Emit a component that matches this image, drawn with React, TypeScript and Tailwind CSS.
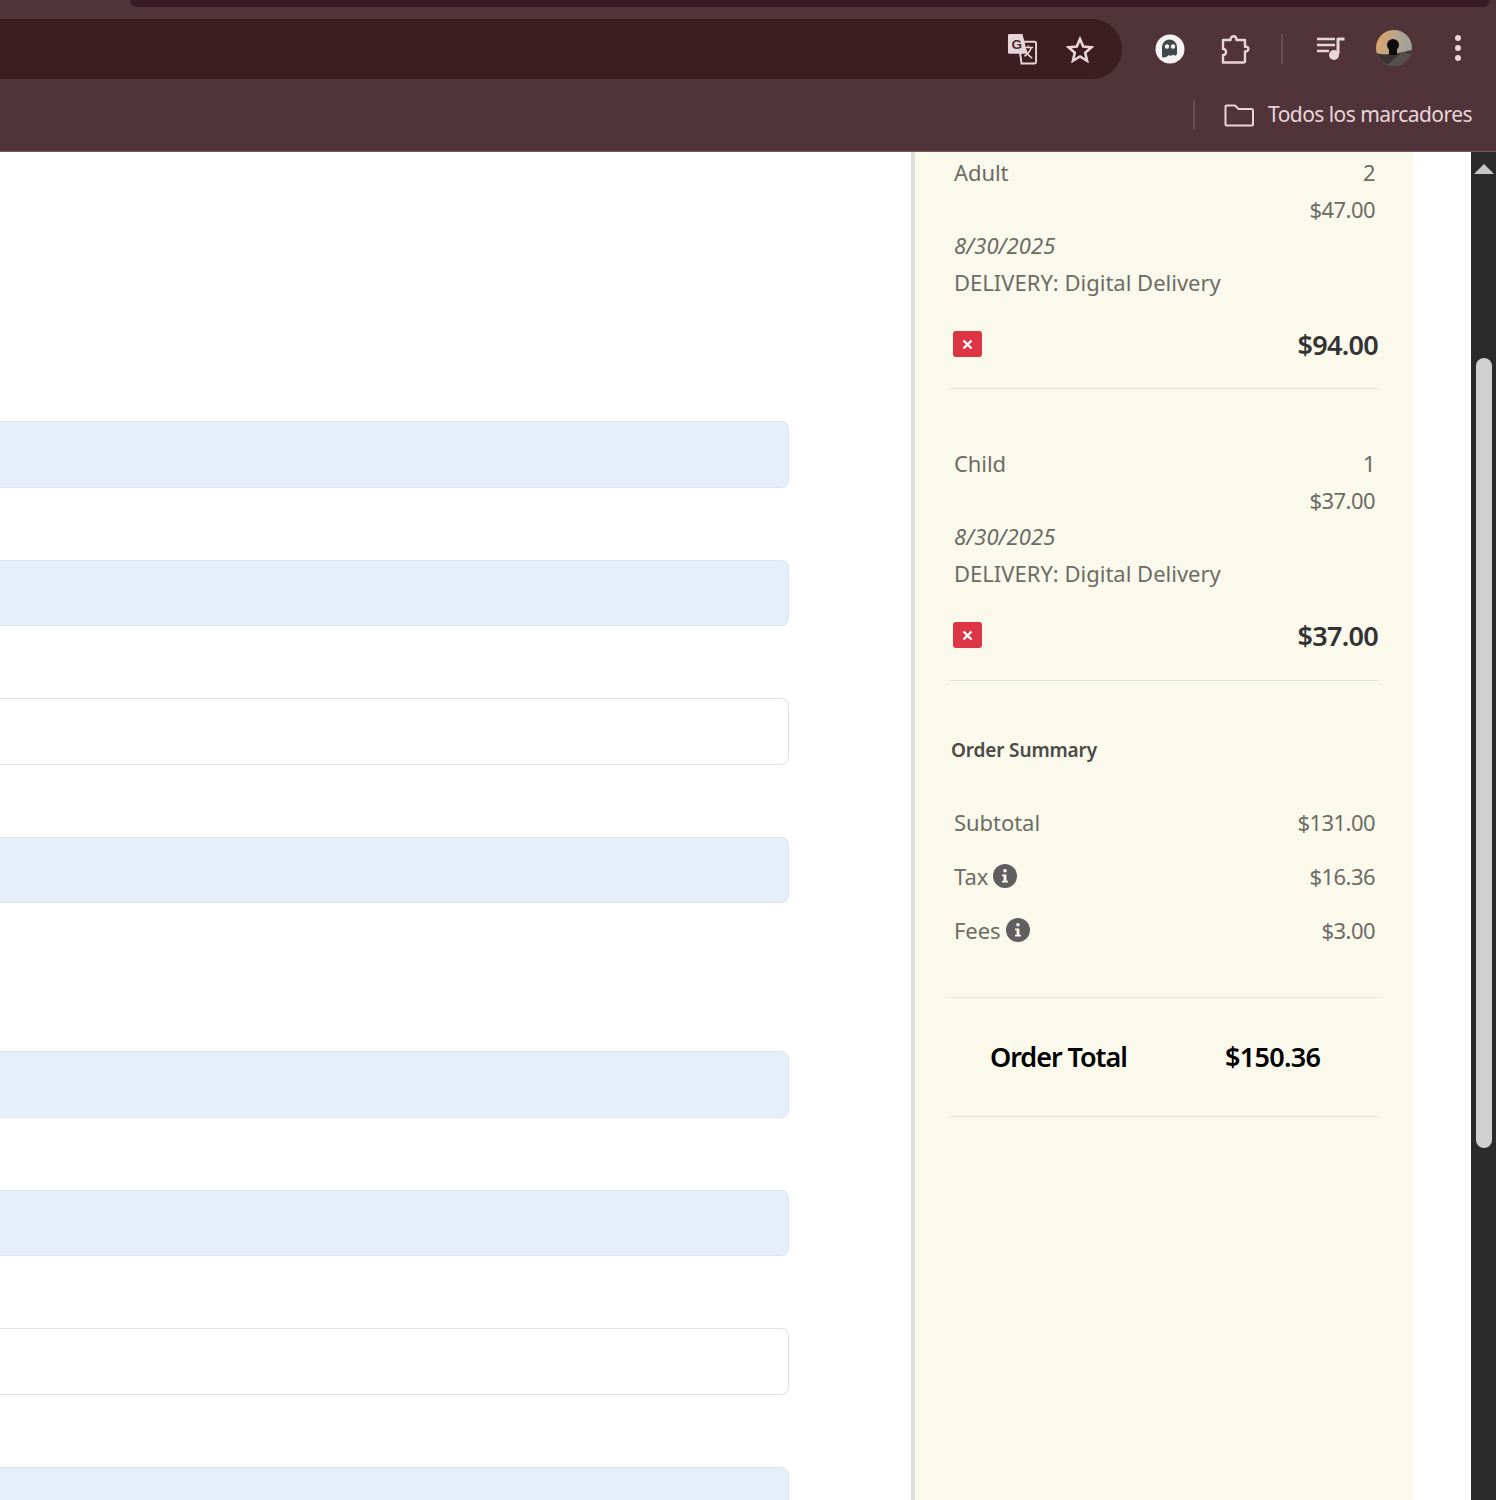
function TranslateIcon() {
  return (
    <svg width="31" height="32" viewBox="0 0 32 33" fill="none">
      <path d="M12 9h16.5a1.5 1.5 0 0 1 1.5 1.5V30a1.5 1.5 0 0 1-1.5 1.5H15z" stroke="#e8d5da" strokeWidth="2" />
      <path d="M17 15h10M22 13v2M25 15c-1 4-4 7-7 9M19 17c1 3 4 7 7 9" stroke="#e8d5da" strokeWidth="1.6" />
      <path d="M2.5 1h13.5l5 20.5H2.5A1.5 1.5 0 0 1 1 20V2.500A1.500 1.500 0 0 1 2.500 1z" fill="#e8d5da" />
      <text x="10" y="16" textAnchor="middle" fontFamily="'Liberation Sans', sans-serif" fontWeight="700" fontSize="14" fill="#4a2d33">
        G
      </text>
    </svg>
  );
}

function StarIcon() {
  return (
    <svg width="28" height="27" viewBox="0 0 28 27" fill="none" className="ml-[28px] mr-[1px]">
      <path d="M14 3l3.200 7.600 8.300.7-6.300 5.400 1.900 8.100L14 20.500l-7.100 4.300 1.900-8.100-6.300-5.400 8.300-.7z" stroke="#e8d5da" strokeWidth="2.600" strokeLinejoin="miter" />
    </svg>
  );
}

function GhostIcon() {
  return (
    <svg width="30" height="30" viewBox="0 0 30 30">
      <circle cx="15" cy="15" r="14.500" fill="#f7f3f3" />
      <path d="M7 23V13a7.500 7.500 0 0 1 15 0v7c-1 2-3 2-4 .5-1 1.500-3 1.500-4 .5-2 2-5 3-7 2z" fill="#3e4a47" />
      <circle cx="12" cy="12.500" r="2.200" fill="#f7f3f3" />
      <circle cx="18" cy="12.500" r="2.200" fill="#f7f3f3" />
    </svg>
  );
}

function PuzzleIcon() {
  return (
    <svg width="32" height="30" viewBox="0 0 32 30" fill="none" stroke="#e8d5da" strokeWidth="2.400" strokeLinejoin="round">
      <path d="M4 6h7.500c0-5 6-5 6 0H26v7c4-1.500 5 4.500 0 4.500V27a1.500 1.500 0 0 1-1.500 1.500H4V21c4 .5 4-6.500 0-6z" />
    </svg>
  );
}

function MediaIcon() {
  return (
    <svg width="29" height="25" viewBox="0 0 29 25" fill="none">
      <path d="M1 3h18M1 9h18M1 15h12" stroke="#e8d5da" strokeWidth="2.600" />
      <path d="M22 2v16" stroke="#e8d5da" strokeWidth="3" />
      <path d="M22 3h6.500" stroke="#e8d5da" strokeWidth="3" />
      <circle cx="18" cy="19" r="5" fill="#e8d5da" />
    </svg>
  );
}

function Avatar() {
  return (
    <svg width="36" height="36" viewBox="0 0 36 36">
      <defs>
        <linearGradient id="sky" x1="0" y1="0.2" x2="1" y2="0.5">
          <stop offset="0" stopColor="#e0a468" />
          <stop offset="0.5" stopColor="#b8a58c" />
          <stop offset="1" stopColor="#99a09a" />
        </linearGradient>
        <clipPath id="round">
          <circle cx="18" cy="18" r="18" />
        </clipPath>
      </defs>
      <g clipPath="url(#round)">
        <rect width="36" height="36" fill="url(#sky)" />
        <path d="M0 23c10 3 24 0 36-3v16H0z" fill="#3b3431" />
        <path d="M10 36l16-14 10 2v12z" fill="#55504b" />
        <circle cx="17" cy="15" r="6" fill="#0e0c0d" />
        <path d="M13 19h8v6h-8z" fill="#0e0c0d" />
      </g>
    </svg>
  );
}

function FolderIcon() {
  return (
    <svg width="30" height="23" viewBox="0 0 30 23" fill="none" stroke="#e8d5da" strokeWidth="2">
      <path d="M2.500 1.500h8.500l3.500 3.500h13a1.500 1.500 0 0 1 1.500 1.500v14a1 1 0 0 1-1 1h-25.500a1 1 0 0 1-1-1V2.500a1 1 0 0 1 1-1z" strokeLinejoin="round" />
    </svg>
  );
}

function InfoDot() {
  return (
    <svg width="24" height="24" viewBox="0 0 24 24" className="shrink-0">
      <circle cx="12" cy="12" r="12" fill="#5f5f5f" />
      <circle cx="12" cy="6.800" r="1.800" fill="#fbf9ec" />
      <path d="M9 10.500h4.400v6.300H15v1.800H9v-1.800h1.600v-4.500H9z" fill="#fbf9ec" />
    </svg>
  );
}

function Field({ blue, className }: { blue: boolean; className: string }) {
  return (
    <div
      className={`h-[66.5px] w-full rounded-r-[8px] border border-l-0 ${
        blue ? "border-[#dce3f0] bg-[#e8effc]" : "border-[#e2e2e2] bg-white"
      } ${className}`}
    />
  );
}

function CartItem({
  label,
  qty,
  price,
  total,
  bottom,
}: {
  label: string;
  qty: string;
  price: string;
  total: string;
  bottom: string;
}) {
  return (
    <div className={`border-b border-[#e4e3d6] ${bottom}`}>
      <div className="flex h-[37px] items-center justify-between pl-1 pr-[3px]">
        <span className="tracking-[-0.1px]">{label}</span>
        <span>{qty}</span>
      </div>
      <div className="flex h-[36px] items-center justify-end pr-[3px]">{price}</div>
      <div className="flex h-[37px] items-center pl-1 italic tracking-[0.1px]">8/30/2025</div>
      <div className="flex h-[37px] items-center pl-1 tracking-[0px]">DELIVERY: Digital Delivery</div>
      <div className="mt-[24px] flex h-[40px] items-center justify-between pl-[3px]">
        <button className="mb-[2px] flex h-[26px] w-[29px] items-center justify-center rounded-[3px] bg-[#dc3545]">
          <svg width="11" height="11" viewBox="0 0 11 11" stroke="white" strokeWidth="2.400">
            <path d="M1.500 1.500l8 8M9.500 1.500l-8 8" />
          </svg>
        </button>
        <span className="text-[27px] font-semibold tracking-[-0.7px] text-[#333]">{total}</span>
      </div>
    </div>
  );
}

function SummaryRow({ label, value, info }: { label: string; value: string; info?: boolean }) {
  return (
    <div className="flex h-[54px] items-center justify-between pl-1 pr-[3px]">
      <span className="flex items-center gap-[5px] tracking-[-0.05px]">
        {label}
        {info ? <InfoDot /> : null}
      </span>
      <span>{value}</span>
    </div>
  );
}

export default function App() {
  return (
    <div className="flex h-[1500px] w-[1496px] flex-col overflow-hidden bg-white font-['Noto_Sans',sans-serif]">
      {/* browser chrome */}
      <div className="h-[152px] shrink-0 border-b border-[#6d5a5e] bg-[#51343a]">
        <div className="ml-[130px] mr-[6px] h-[7px] rounded-b-[10px] bg-[#3a1a27]" />
        <div className="mt-[12px] flex h-[60px] items-center">
          <div className="flex h-[60px] w-[1122px] items-center justify-end rounded-r-[30px] bg-[#3b1d22] pr-[27px]">
            <TranslateIcon />
            <StarIcon />
          </div>
          <div className="ml-[33px]">
            <GhostIcon />
          </div>
          <div className="ml-[34px]">
            <PuzzleIcon />
          </div>
          <div className="ml-[30px] h-[30px] w-[2px] bg-[#6b4c52]" />
          <div className="mb-[2px] ml-[33px]">
            <MediaIcon />
          </div>
          <div className="mb-[2px] ml-[31px]">
            <Avatar />
          </div>
          <div className="mb-[2px] ml-[43px] flex flex-col gap-[4px]">
            <div className="h-[6px] w-[6px] rounded-full bg-[#e8d5da]" />
            <div className="h-[6px] w-[6px] rounded-full bg-[#e8d5da]" />
            <div className="h-[6px] w-[6px] rounded-full bg-[#e8d5da]" />
          </div>
        </div>
        <div className="mt-[20px] flex h-[32px] items-center justify-end pr-[24px]">
          <div className="mr-[29px] h-[30px] w-[2px] bg-[#6b4c52]" />
          <FolderIcon />
          <span className="ml-[14px] text-[21px] tracking-[-0.55px] text-[#e8d5da]">Todos los marcadores</span>
        </div>
      </div>

      <div className="flex min-h-0 flex-1">
        {/* form column */}
        <div className="w-[911px] shrink-0 pr-[122px]">
          <Field blue className="mt-[269px]" />
          <Field blue className="mt-[72px]" />
          <Field blue={false} className="mt-[72px]" />
          <Field blue className="mt-[72px]" />
          <Field blue className="mt-[148px]" />
          <Field blue className="mt-[72px]" />
          <Field blue={false} className="mt-[72px]" />
          <Field blue className="mt-[72px]" />
        </div>

        {/* cart sidebar */}
        <div className="w-[502px] shrink-0 border-l-4 border-[#dcdcd8] bg-[#fbf9ec] px-[35px] pt-[2px] text-[22px] tracking-[-0.55px] text-[#6c6c65]">
          <CartItem label="Adult" qty="2" price="$47.00" total="$94.00" bottom="pb-[23px]" />
          <div className="mt-[56px]">
            <CartItem label="Child" qty="1" price="$37.00" total="$37.00" bottom="pb-[24px]" />
          </div>
          <div className="mt-[54px] h-[30px] pl-[1px] text-[19px] leading-[30px] font-semibold tracking-[-0.15px] text-[#4a4a46]">
            Order Summary
          </div>
          <div className="mt-[30px] border-b border-[#e4e3d6] pb-[40px]">
            <SummaryRow label="Subtotal" value="$131.00" />
            <SummaryRow label="Tax" value="$16.36" info />
            <SummaryRow label="Fees" value="$3.00" info />
          </div>
          <div className="flex h-[119px] items-center border-b border-[#e4e3d6] pl-[40px] text-[27px] font-semibold tracking-[-0.7px] text-black">
            <span className="w-[235px] tracking-[-1.05px]">Order Total</span>
            <span>$150.36</span>
          </div>
        </div>

        <div className="flex-1" />

        {/* page scrollbar */}
        <div className="flex w-[25px] shrink-0 flex-col items-center bg-[#2b2b2b]">
          <div className="mt-[12px] h-0 w-0 border-x-[10px] border-b-[10px] border-x-transparent border-b-[#c8c8c8]" />
          <div className="mt-[184px] h-[790px] w-[16px] rounded-full bg-[#d0d0d0]" />
        </div>
      </div>
    </div>
  );
}
